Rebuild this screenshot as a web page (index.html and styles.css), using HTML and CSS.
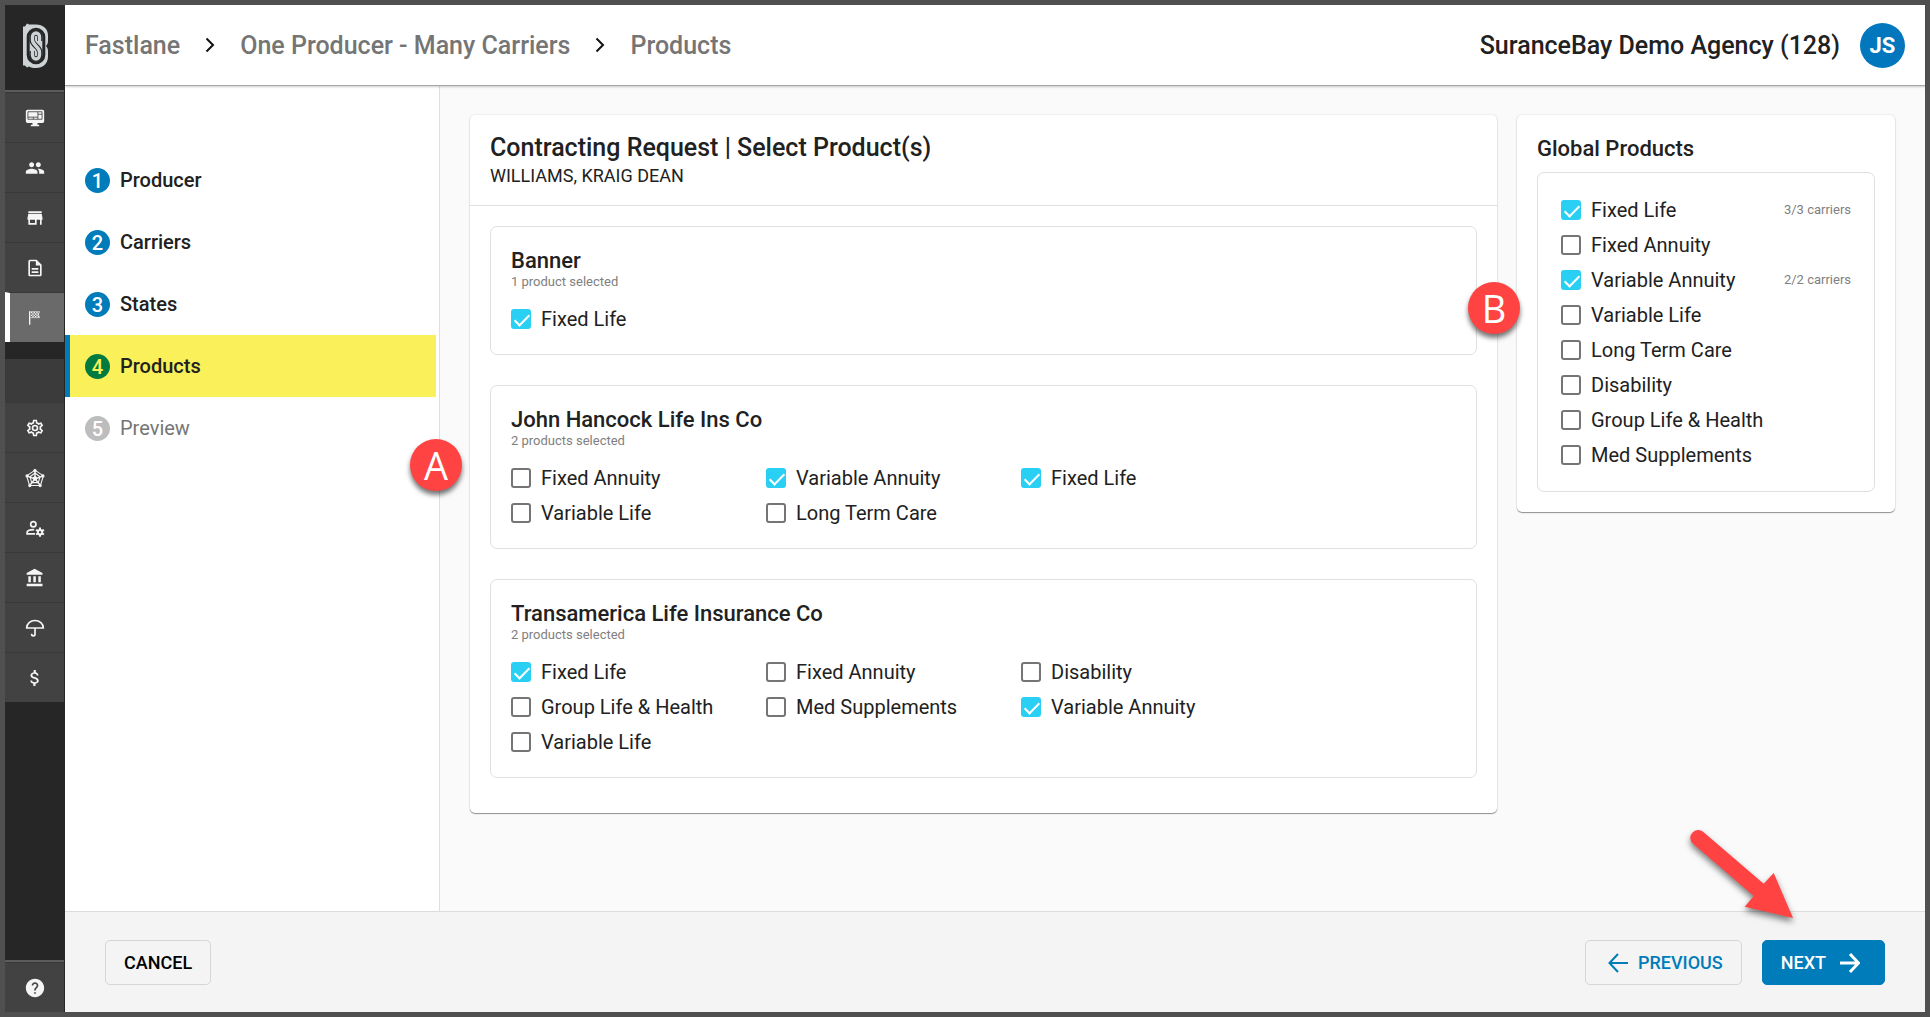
FILE: index.html
```html
<!DOCTYPE html>
<html lang="en">
<head>
    <meta charset="UTF-8">
    <meta name="viewport" content="width=device-width, initial-scale=1.0">
    <title>Fastlane - Products</title>
    <link rel="stylesheet" href="styles.css">
</head>
<body>
    <div class="app">
        <nav class="rail" aria-label="Main">
            <a class="logo" href="#" aria-label="Home">
                <svg width="26" height="46" viewBox="0 0 26 46" fill="none">
                    <path d="M0 3.500H2L4 .5L6 1.500H13C20 1.500 25 5.500 25 12.500V17.500C25 20 24.500 21.500 23 23C24.500 24.500 25 26 25 28.500V33.500C25 40.500 20 45 13 45C10 45 8 44.500 6 43.500L4 44.500L2 42.500H0z" fill="#cdd2d5"/>
                    <rect x="5.200" y="6.200" width="15.600" height="33.600" rx="7.800" stroke="#262626" stroke-width="3"/>
                    <path d="M16.800 18V14a3.800 4 0 0 0-7.600 0V17C9.200 22 16.800 24 16.800 29V32a3.800 4 0 0 1-7.600 0V28" stroke="#262626" stroke-width="5.500"/>
                    <path d="M16.500 18V14a3.500 4 0 0 0-7 0V17C9.500 22 16.500 24 16.500 29V32a3.500 4 0 0 1-7 0V28" stroke="#cdd2d5" stroke-width="3.400"/>
                </svg>
            </a>
            <div class="rail-group">
                <a class="rail-item" href="#" aria-label="Dashboard">
                    <svg viewBox="0 0 24 24"><path d="M3 2h18a2 2 0 0 1 2 2v12a2 2 0 0 1-2 2h-6v2h2v2H7v-2h2v-2H3a2 2 0 0 1-2-2V4a2 2 0 0 1 2-2z"/><path d="M3.500 4.500h17v9h-17zM15.500 4.500v9M15.500 7.500h5M3.500 11h12M10 11v2.500" fill="none" stroke="#424242"/></svg>
                </a>
                <a class="rail-item" href="#" aria-label="Producers">
                    <svg viewBox="0 0 24 24"><path d="M16 11c1.660 0 2.990-1.340 2.990-3S17.660 5 16 5c-1.660 0-3 1.340-3 3s1.340 3 3 3zm-8 0c1.660 0 2.990-1.340 2.990-3S9.660 5 8 5C6.340 5 5 6.340 5 8s1.340 3 3 3zm0 2c-2.330 0-7 1.170-7 3.500V19h14v-2.500c0-2.330-4.670-3.500-7-3.500zm8 0c-.29 0-.62.02-.97.05 1.160.84 1.970 1.970 1.970 3.450V19h6v-2.500c0-2.330-4.670-3.500-7-3.500z"/></svg>
                </a>
                <a class="rail-item" href="#" aria-label="Carriers">
                    <svg viewBox="0 0 24 24"><path d="M20 4H4v2h16V4zm1 10v-2l-1-5H4l-1 5v2h1v6h10v-6h4v6h2v-6h1zm-9 4H6v-4h6v4z"/></svg>
                </a>
                <a class="rail-item" href="#" aria-label="Documents">
                    <svg viewBox="0 0 24 24"><path d="M8 16h8v2H8zm0-4h8v2H8zm6-10H6c-1.100 0-2 .9-2 2v16c0 1.100.89 2 1.990 2H18c1.100 0 2-.9 2-2V8l-6-6zm4 18H6V4h7v5h5v11z"/></svg>
                </a>
                <a class="rail-item active" href="#" aria-label="Fastlane">
                    <svg viewBox="0 0 24 24"><path d="M3 2h2v20H3z"/><path d="M6 3h2v2H6zM10 3h2v2h-2zM14 3h2v2h-2zM8 5h2v2H8zM12 5h2v2h-2zM16 5h2v2h-2zM6 7h2v2H6zM10 7h2v2h-2zM14 7h2v2h-2zM8 9h2v2H8zM12 9h2v2h-2zM16 9h2v2h-2z"/><path d="M5 2.500H19l-2 4 2 5H5" fill="none" stroke="#f5f5f5"/></svg>
                </a>
            </div>
            <div class="rail-blank"></div>
            <div class="rail-group">
                <a class="rail-item" href="#" aria-label="Settings">
                    <svg viewBox="0 0 24 24"><path d="M12,8A4,4 0 0,1 16,12A4,4 0 0,1 12,16A4,4 0 0,1 8,12A4,4 0 0,1 12,8M12,10A2,2 0 0,0 10,12A2,2 0 0,0 12,14A2,2 0 0,0 14,12A2,2 0 0,0 12,10M10,22C9.750,22 9.540,21.820 9.500,21.580L9.130,18.930C8.500,18.680 7.960,18.340 7.440,17.940L4.950,18.950C4.730,19.030 4.460,18.950 4.340,18.730L2.340,15.270C2.210,15.050 2.270,14.780 2.460,14.630L4.570,12.970L4.500,12L4.570,11L2.460,9.370C2.270,9.220 2.210,8.950 2.340,8.730L4.340,5.270C4.460,5.050 4.730,4.960 4.950,5.050L7.440,6.050C7.960,5.660 8.500,5.320 9.130,5.070L9.500,2.420C9.540,2.180 9.750,2 10,2H14C14.250,2 14.460,2.180 14.500,2.420L14.870,5.070C15.500,5.320 16.040,5.660 16.560,6.050L19.050,5.050C19.270,4.960 19.540,5.050 19.660,5.270L21.660,8.730C21.790,8.950 21.730,9.220 21.540,9.370L19.430,11L19.500,12L19.430,13L21.540,14.630C21.730,14.780 21.790,15.050 21.660,15.270L19.660,18.730C19.540,18.950 19.270,19.040 19.050,18.950L16.560,17.950C16.040,18.340 15.500,18.680 14.870,18.930L14.500,21.580C14.460,21.820 14.250,22 14,22H10M11.250,4L10.880,6.610C9.680,6.860 8.620,7.500 7.850,8.390L5.440,7.350L4.690,8.650L6.800,10.200C6.400,11.370 6.400,12.640 6.800,13.800L4.680,15.360L5.430,16.660L7.860,15.620C8.630,16.500 9.680,17.140 10.870,17.380L11.240,20H12.760L13.130,17.390C14.320,17.140 15.370,16.500 16.140,15.620L18.570,16.660L19.320,15.360L17.200,13.810C17.600,12.640 17.600,11.370 17.200,10.200L19.310,8.650L18.560,7.350L16.150,8.390C15.380,7.500 14.320,6.860 13.120,6.620L12.750,4H11.250Z"/></svg>
                </a>
                <a class="rail-item" href="#" aria-label="Network">
                    <svg viewBox="0 0 24 24" fill="none" stroke="#f5f5f5" stroke-width="1.300"><path d="M12 2.500L22 9.500L18.500 21H5.500L2 9.500z"/><path d="M12 6L18 10.500L16 17.500H8L6 10.500z"/><path d="M12 2.500V13M2 9.500L12 13L22 9.500M5.500 21L12 13L18.500 21" stroke-width="1.800"/><circle cx="12" cy="3" r="1.300" fill="#f5f5f5"/><circle cx="2.500" cy="9.500" r="1.300" fill="#f5f5f5"/><circle cx="21.500" cy="9.500" r="1.300" fill="#f5f5f5"/><circle cx="5.800" cy="21" r="1.300" fill="#f5f5f5"/><circle cx="18.200" cy="21" r="1.300" fill="#f5f5f5"/><circle cx="12" cy="12.500" r="2" fill="#f5f5f5"/></svg>
                </a>
                <a class="rail-item" href="#" aria-label="User settings">
                    <svg viewBox="0 0 24 24" fill="none" stroke="#f5f5f5" stroke-width="2"><circle cx="10" cy="7.500" r="3.200"/><path d="M12 19H2.500V17.500C2.500 15 6.500 14 11 14"/><circle cx="18" cy="17" r="2.600" stroke-width="2.400"/><path d="M18 11.500V14M18 20V22.500M13.300 14.200L15.500 15.500M20.500 18.500L22.700 19.800M22.700 14.200L20.500 15.500M15.500 18.500L13.300 19.800" stroke-width="2.400"/></svg>
                </a>
                <a class="rail-item" href="#" aria-label="Bank">
                    <svg viewBox="0 0 24 24"><path d="M11.500,1L2,6V8H21V6M16,10V17H19V10M2,22H21V19H2M10,10V17H13V10M4,10V17H7V10H4Z"/></svg>
                </a>
                <a class="rail-item" href="#" aria-label="Insurance">
                    <svg viewBox="0 0 24 24" fill="none" stroke="#f5f5f5" stroke-width="2"><path d="M2 12C2 7 6.500 3 12 3s10 4 10 9zM12 12v7.500a2 2 0 0 1-4 0V19"/></svg>
                </a>
                <a class="rail-item" href="#" aria-label="Commissions">
                    <svg viewBox="0 0 24 24"><path d="M11.800 10.900c-2.270-.59-3-1.200-3-2.150 0-1.090 1.010-1.850 2.700-1.850 1.780 0 2.440.85 2.500 2.100h2.210c-.07-1.720-1.120-3.300-3.210-3.810V2.500h-2.600v2.660c-1.940.42-3.900 1.680-3.900 3.610 0 2.310 1.910 3.460 4.700 4.130 2.500.6 3 1.480 3 2.410 0 .69-.49 1.790-2.700 1.790-2.060 0-2.870-.92-2.980-2.100h-2.200c.12 2.190 1.760 3.420 3.680 3.830V21.500h2.600v-2.650c1.950-.37 3.900-1.500 3.900-3.550 0-2.840-2.430-3.810-4.700-4.400z"/></svg>
                </a>
            </div>
            <div class="rail-group rail-bottom">
                <a class="rail-item" href="#" aria-label="Help">
                    <svg viewBox="0 0 24 24"><path d="M12 1C6 1 1 6 1 12s5 11 11 11 11-5 11-11S18 1 12 1zm1 18h-2v-2h2v2zm2.070-7.750l-.9.92C13.450 12.900 13 13.500 13 15h-2v-.5c0-1.100.45-2.100 1.170-2.830l1.240-1.260c.37-.36.59-.86.59-1.410 0-1.100-.9-2-2-2s-2 .9-2 2H8c0-2.210 1.790-4 4-4s4 1.790 4 4c0 .88-.36 1.680-.93 2.250z"/></svg>
                </a>
            </div>
        </nav>

        <div class="page">
            <header class="topbar">
                <nav class="breadcrumb" aria-label="Breadcrumb">
                    <a href="#">Fastlane</a>
                    <svg width="10" height="16" viewBox="0 0 10 16"><path d="M1.500 1.500L8 8L1.500 14.500"/></svg>
                    <a href="#">One Producer - Many Carriers</a>
                    <svg width="10" height="16" viewBox="0 0 10 16"><path d="M1.500 1.500L8 8L1.500 14.500"/></svg>
                    <a href="#">Products</a>
                </nav>
                <div class="account">
                    <span class="agency">SuranceBay Demo Agency (128)</span>
                    <button class="avatar" type="button">JS</button>
                </div>
            </header>

            <div class="body">
                <aside class="steps">
                    <ol class="step-list">
                        <li><a class="step" href="#"><span class="num">1</span>Producer</a></li>
                        <li><a class="step" href="#"><span class="num">2</span>Carriers</a></li>
                        <li><a class="step" href="#"><span class="num">3</span>States</a></li>
                        <li><a class="step current" href="#"><span class="num">4</span>Products</a></li>
                        <li><a class="step disabled" href="#"><span class="num">5</span>Preview</a></li>
                    </ol>
                    <span class="marker marker-a">A</span>
                </aside>

                <main class="content">
                    <section class="card request">
                        <div class="card-header">
                            <h1>Contracting Request | Select Product(s)</h1>
                            <p>WILLIAMS, KRAIG DEAN</p>
                        </div>
                        <div class="carriers">
                            <section class="carrier">
                                <h2>Banner</h2>
                                <p class="count">1 product selected</p>
                                <div class="products">
                                    <label class="check"><input type="checkbox" checked>Fixed Life</label>
                                </div>
                            </section>
                            <section class="carrier">
                                <h2>John Hancock Life Ins Co</h2>
                                <p class="count">2 products selected</p>
                                <div class="products">
                                    <label class="check"><input type="checkbox">Fixed Annuity</label>
                                    <label class="check"><input type="checkbox" checked>Variable Annuity</label>
                                    <label class="check"><input type="checkbox" checked>Fixed Life</label>
                                    <label class="check"><input type="checkbox">Variable Life</label>
                                    <label class="check"><input type="checkbox">Long Term Care</label>
                                </div>
                            </section>
                            <section class="carrier">
                                <h2>Transamerica Life Insurance Co</h2>
                                <p class="count">2 products selected</p>
                                <div class="products">
                                    <label class="check"><input type="checkbox" checked>Fixed Life</label>
                                    <label class="check"><input type="checkbox">Fixed Annuity</label>
                                    <label class="check"><input type="checkbox">Disability</label>
                                    <label class="check"><input type="checkbox">Group Life &amp; Health</label>
                                    <label class="check"><input type="checkbox">Med Supplements</label>
                                    <label class="check"><input type="checkbox" checked>Variable Annuity</label>
                                    <label class="check"><input type="checkbox">Variable Life</label>
                                </div>
                            </section>
                        </div>
                        <span class="marker marker-b">B</span>
                    </section>

                    <aside class="card global">
                        <h2>Global Products</h2>
                        <ul class="global-list">
                            <li><label class="check"><input type="checkbox" checked>Fixed Life</label><span class="count">3/3 carriers</span></li>
                            <li><label class="check"><input type="checkbox">Fixed Annuity</label></li>
                            <li><label class="check"><input type="checkbox" checked>Variable Annuity</label><span class="count">2/2 carriers</span></li>
                            <li><label class="check"><input type="checkbox">Variable Life</label></li>
                            <li><label class="check"><input type="checkbox">Long Term Care</label></li>
                            <li><label class="check"><input type="checkbox">Disability</label></li>
                            <li><label class="check"><input type="checkbox">Group Life &amp; Health</label></li>
                            <li><label class="check"><input type="checkbox">Med Supplements</label></li>
                        </ul>
                    </aside>
                </main>
            </div>

            <footer class="actions">
                <button class="btn" type="button">CANCEL</button>
                <div class="actions-right">
                    <button class="btn previous" type="button">
                        <svg width="20" height="20" viewBox="0 0 20 20"><path d="M20 10H2M10 1L1.500 10L10 19"/></svg>
                        PREVIOUS
                    </button>
                    <button class="btn next" type="button">
                        NEXT
                        <svg width="20" height="20" viewBox="0 0 20 20"><path d="M0 10H18M10 1L18.500 10L10 19"/></svg>
                    </button>
                </div>
                <svg class="pointer" width="120" height="110" viewBox="0 0 120 110">
                    <path d="M11.600 11.500a7.500 7.500 0 0 1 10.500-.8L82.700 62.700L92.700 52L112 97L63.700 85.700L72.800 75L12.600 23.200A7.500 7.500 0 0 1 11.600 11.500z" fill="#ff4343"/>
                </svg>
            </footer>
        </div>
    </div>
</body>
</html>
```
FILE: styles.css
```css
* {
    box-sizing: border-box;
}
body {
    margin: 0;
    background-color: #505050;
    color: #212121;
    font-family: Roboto, "Liberation Sans", sans-serif;
    font-size: 20px;
}
h1, h2, p, ol, ul {
    margin: 0;
    padding: 0;
    font-weight: 400;
}
ol, ul {
    list-style: none;
}
a {
    color: inherit;
    text-decoration: none;
}
svg {
    display: block;
}
.app {
    display: flex;
    min-height: 100vh;
    border: 5px solid #505050;
}

/* left icon rail */
.rail {
    display: flex;
    flex-direction: column;
    width: 60px;
    background-color: #262626;
    border-right: 1px solid #262626;
}
.logo {
    display: flex;
    justify-content: center;
    align-items: center;
    height: 85px;
    padding: 0 0 4px 3px;
}
.rail-group:first-of-type {
    border-top: 2px solid #5c5c5c;
}
.rail-item {
    display: flex;
    justify-content: center;
    align-items: center;
    height: 50px;
    background-color: #424242;
    border-top: 1px solid #383838;
}
.rail-item svg {
    width: 20px;
    height: 20px;
}
.rail-item svg:not([fill]) {
    fill: #f5f5f5;
}
.rail-item.active {
    background-color: #6a6a6a;
    border-left: 5px solid #fff;
    padding-right: 5px;
}
.rail-item.active svg {
    width: 16px;
    height: 16px;
}
.rail-blank {
    height: 43px;
    margin-top: 17px;
    background-color: #3b3b3b;
}
.rail-bottom {
    margin-top: auto;
    border-top: 2px solid #5c5c5c;
}

/* page shell */
.page {
    display: flex;
    flex-direction: column;
    flex: 1;
    min-width: 0;
    background-color: #fafafa;
}
.topbar {
    display: flex;
    justify-content: space-between;
    align-items: center;
    height: 81px;
    padding: 0 20px;
    background-color: #fff;
    border-bottom: 1px solid #a3a8a5;
    box-shadow: 0 1px 2px rgba(0, 0, 0, 0.2);
    font-size: 25px;
    font-weight: 500;
    z-index: 1;
}
.breadcrumb {
    display: flex;
    align-items: center;
    gap: 25px;
    color: #757575;
}
.breadcrumb svg, .btn svg {
    fill: none;
    stroke: #111;
    stroke-width: 2;
}
.account {
    display: flex;
    align-items: center;
    gap: 20px;
}
.avatar {
    width: 45px;
    height: 45px;
    padding: 0;
    border: none;
    border-radius: 50%;
    background-color: #0277bd;
    color: #fff;
    font-family: inherit;
    font-size: 22px;
    font-weight: 700;
}
.body {
    display: flex;
    flex: 1;
}

/* wizard steps */
.steps {
    position: relative;
    width: 375px;
    padding-top: 63px;
    background-color: #fff;
    border-right: 1px solid #dedede;
}
.step {
    display: flex;
    align-items: center;
    gap: 10px;
    height: 62px;
    padding-left: 15px;
    margin-right: 3px;
    border-left: 5px solid transparent;
    font-weight: 500;
}
.num {
    width: 25px;
    height: 25px;
    border-radius: 50%;
    background-color: #007cba;
    color: #fff;
    font-weight: 500;
    line-height: 26px;
    text-align: center;
}
.step.current {
    background-color: #faf05a;
    border-left-color: #007cba;
}
.step.current .num {
    background-color: #007a3e;
    color: #faf05a;
}
.step.disabled {
    color: #757575;
    font-weight: 400;
}
.step.disabled .num {
    background-color: #bdbdbd;
}

/* cards */
.content {
    display: flex;
    align-items: flex-start;
    flex: 1;
    gap: 20px;
    padding: 29px 30px;
}
.card {
    position: relative;
    background-color: #fff;
    border-radius: 5px;
    box-shadow: 0 1px 1px rgba(0, 0, 0, 0.4), 0 0 2px rgba(0, 0, 0, 0.15);
}
.request {
    flex: 1;
}
.card-header {
    padding: 18px 20px 16px;
    border-bottom: 1px solid #e0e0e0;
}
.card-header h1 {
    font-size: 25px;
    font-weight: 500;
    line-height: 30px;
}
.card-header p {
    font-size: 18px;
    line-height: 26px;
}
.carriers {
    display: flex;
    flex-direction: column;
    gap: 30px;
    padding: 20px 20px 35px;
}
.carrier {
    padding: 20px 20px 18px;
    border: 1px solid #e0e0e0;
    border-radius: 7px;
}
.card h2 {
    font-size: 22px;
    font-weight: 500;
    line-height: 28px;
}
.count {
    color: #808080;
    font-size: 13px;
    line-height: 14px;
}
.products {
    display: grid;
    grid-template-columns: repeat(auto-fill, 255px);
    margin-top: 12px;
}
.check {
    display: flex;
    align-items: center;
    gap: 10px;
    height: 35px;
}
.check input {
    position: relative;
    appearance: none;
    width: 20px;
    height: 20px;
    margin: 0;
    border: 2px solid #757575;
    border-radius: 3px;
}
.check input:checked {
    border-color: #29d0f4;
    background-color: #29d0f4;
}
.check input:checked::after {
    content: "";
    position: absolute;
    left: 5px;
    top: 0;
    width: 6px;
    height: 13px;
    border: solid #fff;
    border-width: 0 2px 2px 0;
    transform: rotate(45deg);
}
.global {
    width: 378px;
    padding: 20px 20px 20px;
}
.global-list {
    margin-top: 9px;
    padding: 19px 23px;
    border: 1px solid #e0e0e0;
    border-radius: 7px;
}
.global-list li {
    display: flex;
    justify-content: space-between;
    align-items: center;
}

/* bottom bar */
.actions {
    position: relative;
    display: flex;
    justify-content: space-between;
    align-items: flex-start;
    height: 101px;
    padding: 28px 40px;
    background-color: #f4f4f4;
    border-top: 1px solid #dcdcdc;
}
.actions-right {
    display: flex;
    gap: 20px;
}
.btn {
    display: flex;
    align-items: center;
    gap: 10px;
    height: 45px;
    padding: 0 18px;
    border: 1px solid #d6d6d6;
    border-radius: 5px;
    background-color: transparent;
    color: #000;
    font-family: inherit;
    font-size: 18px;
    font-weight: 500;
}
.btn.previous {
    padding-left: 22px;
    color: #007cba;
}
.btn.previous svg {
    stroke: #007cba;
}
.btn.next {
    gap: 14px;
    padding-right: 24px;
    border-color: #007cba;
    background-color: #007cba;
    color: #fff;
}
.btn.next svg {
    stroke: #fff;
    stroke-width: 3;
}

/* callouts over the page */
.marker {
    position: absolute;
    z-index: 2;
    width: 52px;
    height: 52px;
    border-radius: 50%;
    background-color: #ff4343;
    box-shadow: 0 4px 5px rgba(0, 0, 0, 0.55);
    color: #fff;
    font-family: "Open Sans", sans-serif;
    font-size: 38px;
    line-height: 52px;
    text-align: center;
}
.marker-a {
    top: 353px;
    right: -23px;
}
.marker-b {
    top: 167px;
    right: -23px;
}
.pointer {
    position: absolute;
    top: -91px;
    right: 124px;
    filter: drop-shadow(0 4px 3px rgba(0, 0, 0, 0.5));
}
```
